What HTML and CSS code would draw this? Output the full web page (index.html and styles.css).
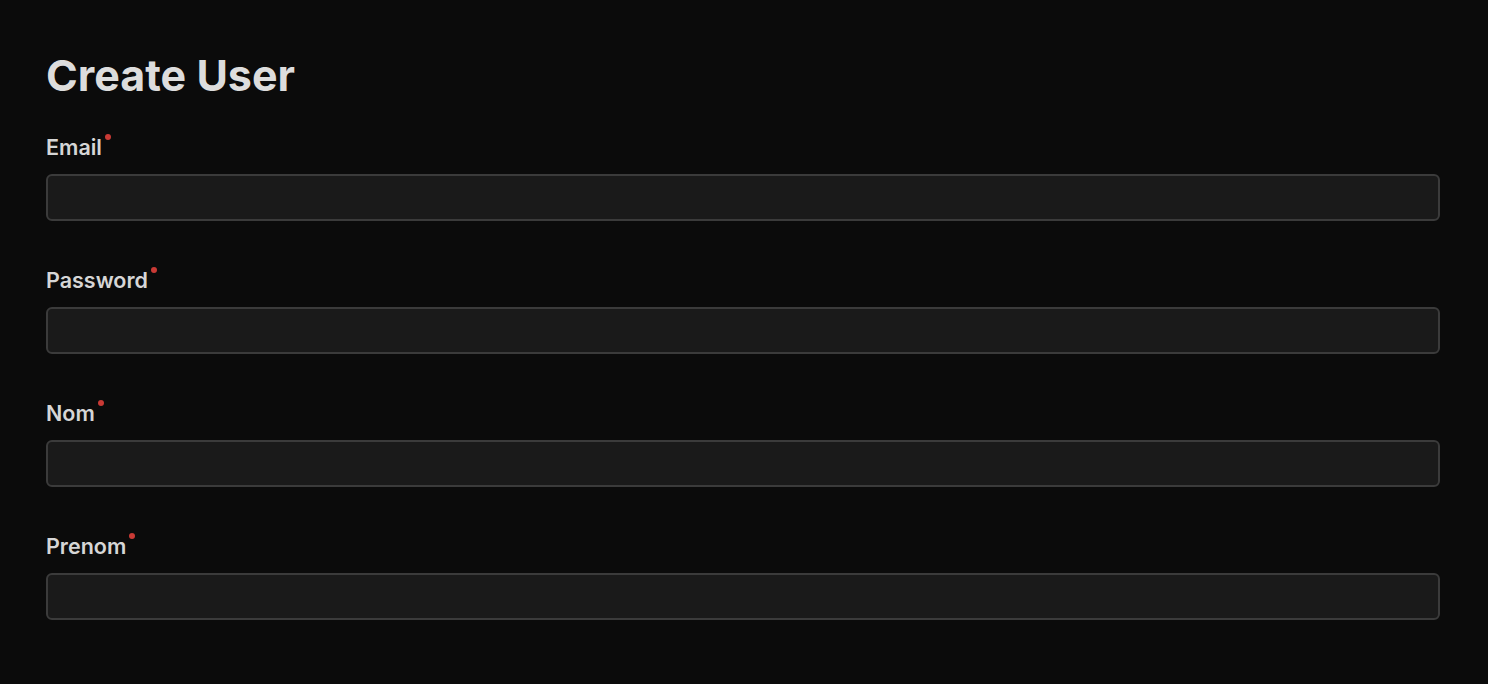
FILE: index.html
```html
<!DOCTYPE html>
<html lang="en">
<head>
    <meta charset="UTF-8">
    <meta name="viewport" content="width=device-width, initial-scale=1.0">
    <title>Create User</title>
    <link rel="stylesheet" href="styles.css">
</head>
<body>
    <div class="container">
        <h1 class="page-title">Create User</h1>

        <form class="user-form">
            <div class="field">
                <label class="field-label" for="email">Email<span class="required"></span></label>
                <input id="email" class="field-input" type="email">
            </div>
            <div class="field">
                <label class="field-label" for="password">Password<span class="required"></span></label>
                <input id="password" class="field-input" type="password">
            </div>
            <div class="field">
                <label class="field-label" for="nom">Nom<span class="required"></span></label>
                <input id="nom" class="field-input" type="text">
            </div>
            <div class="field">
                <label class="field-label" for="prenom">Prenom<span class="required"></span></label>
                <input id="prenom" class="field-input" type="text">
            </div>
        </form>
    </div>
</body>
</html>
```

FILE: styles.css
```css
* {
    margin: 0;
    padding: 0;
    box-sizing: border-box;
}

body {
    font-family: Inter, 'Noto Sans', sans-serif;
    background: #0b0b0b;
    color: #dcdcdc;
    min-height: 100vh;
}

.container {
    padding: 50px 48px 0 46px;
}

.page-title {
    font-size: 43px;
    font-weight: 700;
    line-height: 50px;
    color: #dddddd;
    margin-bottom: 34px;
}

.user-form {
    display: flex;
    flex-direction: column;
    gap: 46px;
}

.field {
    display: flex;
    flex-direction: column;
    gap: 15px;
}

.field-label {
    font-size: 21.5px;
    font-weight: 600;
    line-height: 24px;
    color: #d6d6d6;
}

.required {
    display: inline-block;
    width: 6px;
    height: 6px;
    border-radius: 50%;
    background: #c93a35;
    margin-left: 3px;
    vertical-align: 15px;
}

.field-input {
    width: 100%;
    height: 47px;
    background: #1a1a1a;
    border: 2px solid #3b3b3b;
    border-radius: 6px;
    color: #dcdcdc;
    font-family: inherit;
    font-size: 18px;
    padding: 0 12px;
    outline: none;
}
```
